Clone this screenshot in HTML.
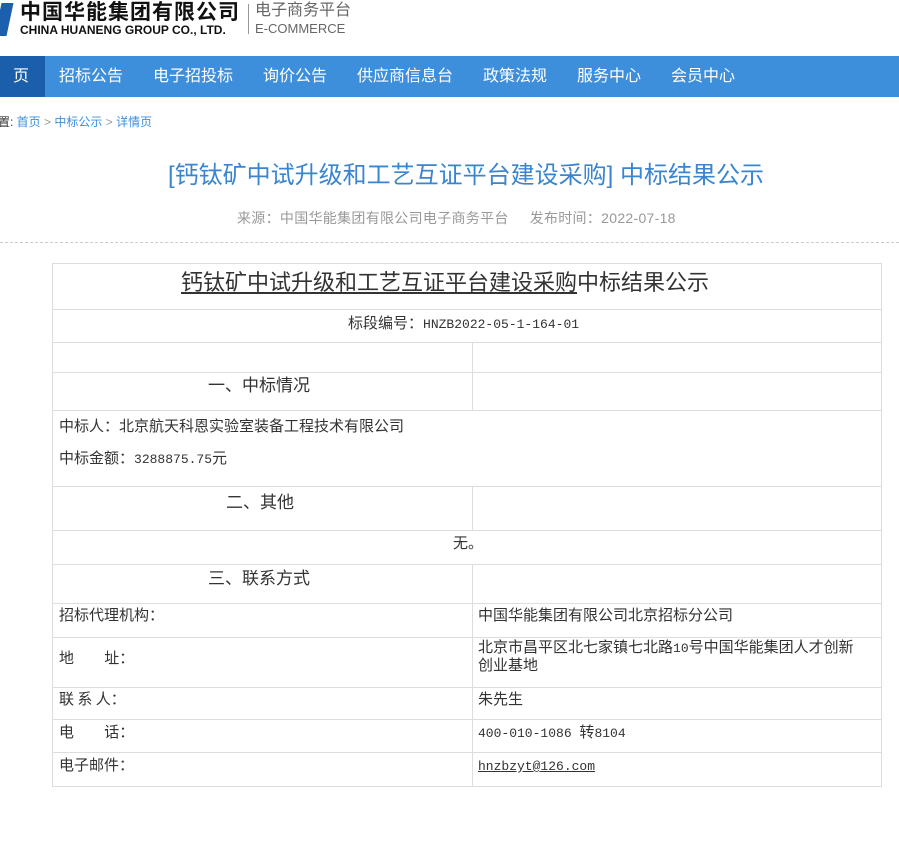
<!DOCTYPE html>
<html><head><meta charset="utf-8"><style>
*{margin:0;padding:0;box-sizing:border-box}
body{width:899px;height:846px;background:#fff;font-family:"Liberation Sans","Noto Sans CJK SC",sans-serif;position:relative;overflow:hidden;color:#333}
.abs{position:absolute;white-space:nowrap;line-height:1}
.nav{position:absolute;left:0;top:56px;width:899px;height:41px;background:#3d8fdc}
.nav span{position:absolute;top:0;line-height:41px;color:#fff;font-size:16px}
.tbl{position:absolute;left:52px;top:263px;width:830px;height:524px;border:1px solid #ddd}
.h{position:absolute;left:0;width:828px;border-top:1px solid #ddd}
.v{position:absolute;left:419px;width:0;border-left:1px solid #ddd}
.t{position:absolute;white-space:nowrap;font-family:"Noto Sans CJK SC",sans-serif;font-size:15px;color:#333;line-height:1.2}
.m{font-family:"Liberation Mono",monospace;font-size:13px}
</style></head><body>
<div class="abs" style="top:3px;width:12px;height:33px;background:#1c5fae;transform:skewX(-12deg);left:-2px"></div>
<div class="abs" style="left:20px;top:2px;font-size:21px;font-weight:bold;color:#111;letter-spacing:1px">中国华能集团有限公司</div>
<div class="abs" style="left:20px;top:24px;font-size:12px;font-weight:bold;color:#111">CHINA HUANENG GROUP CO., LTD.</div>
<div class="abs" style="left:248px;top:4px;width:1px;height:30px;background:#999"></div>
<div class="abs" style="left:255px;top:3px;font-size:16px;color:#666">电子商务平台</div>
<div class="abs" style="left:255px;top:22px;font-size:13px;color:#666">E-COMMERCE</div>
<div class="nav">
<div style="position:absolute;left:0;top:0;width:45px;height:41px;background:#1b5ea9"></div>
<span style="left:13px">页</span><span style="left:59px">招标公告</span><span style="left:153px">电子招投标</span><span style="left:263px">询价公告</span><span style="left:357px">供应商信息台</span><span style="left:483px">政策法规</span><span style="left:577px">服务中心</span><span style="left:671px">会员中心</span>
</div>
<div class="abs" style="left:-2px;top:116px;font-size:12px;color:#333">置: <span style="color:#3d8fdc">首页</span> <span style="color:#999">&gt;</span> <span style="color:#3d8fdc">中标公示</span> <span style="color:#999">&gt;</span> <span style="color:#3d8fdc">详情页</span></div>
<div class="abs" style="left:168px;top:164px;font-size:24px;color:#3a85d0">[钙钛矿中试升级和工艺互证平台建设采购] 中标结果公示</div>
<div class="abs" style="left:237px;top:211px;font-size:14px;color:#999;letter-spacing:0.3px">来源：中国华能集团有限公司电子商务平台 &nbsp; &nbsp; 发布时间：2022-07-18</div>
<div class="abs" style="left:0;top:242px;width:899px;border-top:1px dashed #ccc"></div>
<div class="tbl">
<div class="h" style="top:45px"></div><div class="h" style="top:78px"></div><div class="h" style="top:108px"></div><div class="h" style="top:146px"></div><div class="h" style="top:222px"></div><div class="h" style="top:266px"></div><div class="h" style="top:300px"></div><div class="h" style="top:339px"></div><div class="h" style="top:373px"></div><div class="h" style="top:423px"></div><div class="h" style="top:455px"></div><div class="h" style="top:488px"></div>
<div class="v" style="top:78px;height:68px"></div><div class="v" style="top:222px;height:44px"></div><div class="v" style="top:300px;height:222px"></div>
<div class="t" style="left:128px;top:4px;font-size:22px"><span style="text-decoration:underline">钙钛矿中试升级和工艺互证平台建设采购</span>中标结果公示</div>
<div class="t" style="left:295px;top:50px">标段编号：<span class="m">HNZB2022-05-1-164-01</span></div>
<div class="t" style="left:155px;top:110px;font-size:17px">一、中标情况</div>
<div class="t" style="left:6px;top:153px">中标人：北京航天科恩实验室装备工程技术有限公司</div>
<div class="t" style="left:6px;top:185px">中标金额：<span class="m">3288875.75</span>元</div>
<div class="t" style="left:173px;top:227px;font-size:17px">二、其他</div>
<div class="t" style="left:400px;top:270px">无。</div>
<div class="t" style="left:155px;top:303px;font-size:17px">三、联系方式</div>
<div class="t" style="left:6px;top:342px">招标代理机构：</div>
<div class="t" style="left:425px;top:342px">中国华能集团有限公司北京招标分公司</div>
<div class="t" style="left:6px;top:385px">地&nbsp; &nbsp; &nbsp; &nbsp; &nbsp;址：</div>
<div class="t" style="left:425px;top:375px;line-height:16px">北京市昌平区北七家镇七北路<span class="m">10</span>号中国华能集团人才创新<br>创业基地</div>
<div class="t" style="left:6px;top:426px">联 系 人：</div>
<div class="t" style="left:425px;top:426px">朱先生</div>
<div class="t" style="left:6px;top:459px">电&nbsp; &nbsp; &nbsp; &nbsp; &nbsp;话：</div>
<div class="t" style="left:425px;top:459px"><span class="m">400-010-1086 </span>转<span class="m">8104</span></div>
<div class="t" style="left:6px;top:492px">电子邮件：</div>
<div class="t" style="left:425px;top:492px;text-decoration:underline"><span class="m">hnzbzyt@126.com</span></div>
</div>
</body></html>
